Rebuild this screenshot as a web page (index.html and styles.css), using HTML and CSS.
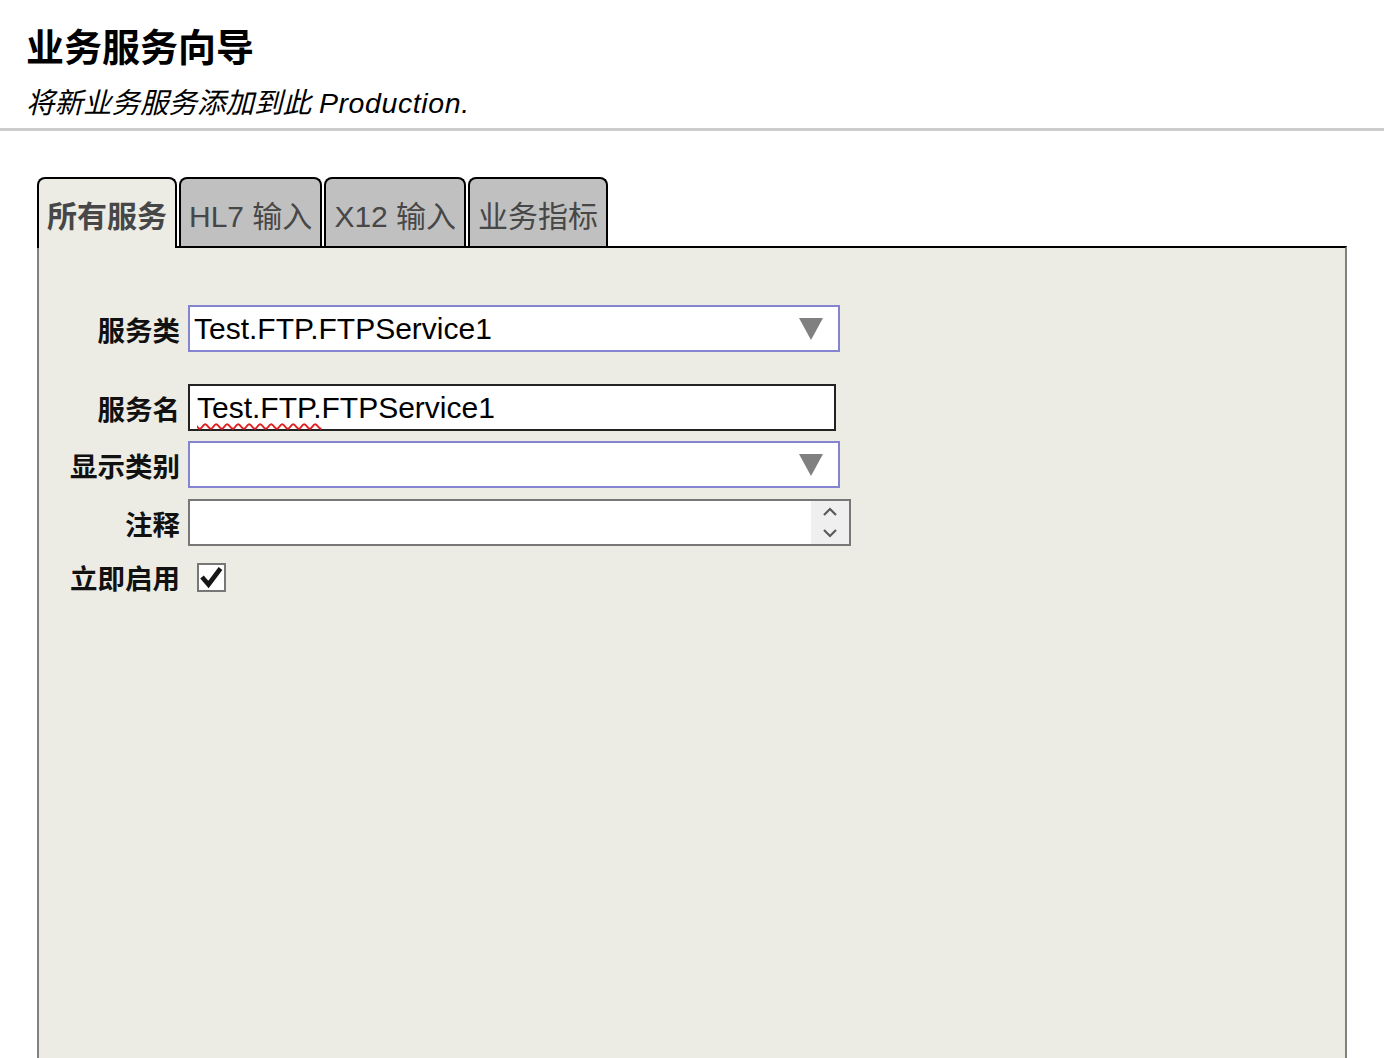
FILE: index.html
```html
<!DOCTYPE html>
<html lang="zh-CN">
<head>
<meta charset="utf-8">
<title>业务服务向导</title>
<link rel="stylesheet" href="styles.css">
</head>
<body>
<div class="header">
  <div class="title">业务服务向导</div>
  <div class="subtitle">将新业务服务添加到此 <span class="latin">Production.</span></div>
</div>
<div class="rule"></div>

<div class="tabs">
  <div class="tab active">所有服务</div>
  <div class="tab">HL7 输入</div>
  <div class="tab">X12 输入</div>
  <div class="tab">业务指标</div>
</div>
<div class="panel">
  <div class="row row-class">
    <div class="label">服务类</div>
    <div class="select">
      <span class="value">Test.FTP.FTPService1</span>
      <svg class="arrow" width="24" height="22" viewBox="0 0 24 22"><polygon points="0,0 24,0 12,22" fill="#808080"/></svg>
    </div>
  </div>
  <div class="row row-name">
    <div class="label">服务名</div>
    <div class="input"><span class="value"><span class="spell">Test.FTP.</span>FTPService1</span></div>
  </div>
  <div class="row row-cat">
    <div class="label">显示类别</div>
    <div class="select">
      <span class="value"></span>
      <svg class="arrow" width="24" height="22" viewBox="0 0 24 22"><polygon points="0,0 24,0 12,22" fill="#808080"/></svg>
    </div>
  </div>
  <div class="row row-note">
    <div class="label">注释</div>
    <div class="textarea">
      <div class="ta-body"></div>
      <div class="spinner">
        <svg width="16" height="10" viewBox="0 0 16 10"><polyline points="2,8 8,2 14,8" fill="none" stroke="#5a5a5a" stroke-width="2.2"/></svg>
        <svg width="16" height="10" viewBox="0 0 16 10"><polyline points="2,2 8,8 14,2" fill="none" stroke="#5a5a5a" stroke-width="2.2"/></svg>
      </div>
    </div>
  </div>
  <div class="row row-enable">
    <div class="label">立即启用</div>
    <div class="checkbox">
      <svg width="25" height="25" viewBox="0 0 25 25"><polyline points="3,12 9.5,19.5 21.5,3.5" fill="none" stroke="#161616" stroke-width="4.6" stroke-linejoin="miter"/></svg>
    </div>
  </div>
</div>
</body>
</html>
```

FILE: styles.css
```css
html, body {
  margin: 0;
  padding: 0;
  background: #ffffff;
  overflow: hidden;
}
body {
  font-family: "Liberation Sans", "Noto Sans CJK SC", sans-serif;
  color: #000;
}
.header {
  padding: 26px 0 0 26px;
}
.title {
  font-size: 38px;
  font-weight: bold;
  line-height: 44px;
  height: 44px;
}
.subtitle {
  margin-top: 15px;
  font-size: 28.5px;
  font-style: italic;
  line-height: 36px;
  height: 36px;
}
.subtitle .latin {
  letter-spacing: 0.6px;
}
.rule {
  margin-top: 7px;
  height: 3px;
  background: #cccccc;
}
.tabs {
  display: flex;
  align-items: flex-end;
  margin: 46px 0 0 37px;
  gap: 2px;
}
.tab {
  box-sizing: border-box;
  height: 69px;
  padding: 2px 8px 0 8px;
  border: 2px solid #000;
  border-bottom: none;
  border-radius: 8px 8px 0 0;
  background: #c0c0c0;
  color: #474747;
  font-size: 30px;
  display: flex;
  align-items: center;
  white-space: nowrap;
}
.tab.active {
  height: 71px;
  margin-bottom: -2px;
  padding-bottom: 2px;
  background: #ecebe4;
  font-weight: bold;
  position: relative;
  z-index: 1;
}
.panel {
  box-sizing: border-box;
  margin-left: 37px;
  width: 1310px;
  height: 820px;
  background: #ecebe4;
  border-top: 2px solid #000;
  border-left: 2px solid #808080;
  border-right: 2px solid #808080;
  padding-top: 57px;
}
.row {
  display: flex;
  align-items: center;
}
.label {
  width: 141px;
  margin-right: 8px;
  text-align: right;
  font-size: 27.5px;
  font-weight: bold;
  white-space: nowrap;
  color: #111;
}
.value {
  font-size: 30px;
  line-height: 43px;
  white-space: nowrap;
}
.select {
  box-sizing: border-box;
  width: 652px;
  height: 47px;
  border: 2px solid #8585cf;
  background: #fff;
  display: flex;
  align-items: center;
  justify-content: space-between;
  padding: 0 15px 0 4px;
}
.select .arrow {
  display: block;
  margin-top: 1px;
}
.row-name {
  margin-top: 32px;
}
.input {
  box-sizing: border-box;
  width: 648px;
  height: 47px;
  border: 2px solid #222;
  background: #fff;
  display: flex;
  align-items: center;
  padding-left: 7px;
}
.spell {
  text-decoration: underline wavy #e02020;
  text-decoration-thickness: 1.6px;
  text-underline-offset: 5px;
}
.row-cat {
  margin-top: 10px;
}
.row-note {
  margin-top: 11px;
}
.textarea {
  box-sizing: border-box;
  width: 663px;
  height: 47px;
  border: 2px solid #777;
  background: #fff;
  display: flex;
}
.ta-body {
  flex: 1;
}
.spinner {
  width: 38px;
  background: #efefef;
  display: flex;
  flex-direction: column;
  align-items: center;
  justify-content: center;
  gap: 11px;
}
.spinner svg {
  display: block;
}
.row-enable {
  margin-top: 11px;
}
.checkbox {
  box-sizing: border-box;
  width: 29px;
  height: 29px;
  margin-left: 9px;
  border: 2px solid #777;
  background: #fff;
  display: flex;
  align-items: center;
  justify-content: center;
}
.checkbox svg {
  display: block;
}
```
